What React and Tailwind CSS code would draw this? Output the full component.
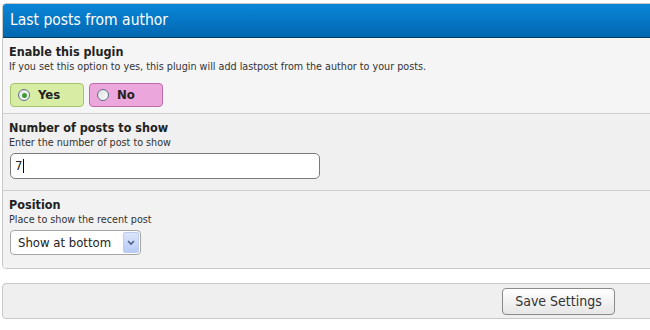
export default function App() {
  const font = { fontFamily: '"DejaVu Sans Condensed", "DejaVu Sans", sans-serif' };
  return (
    <div className="w-[650px] h-[330px] bg-white overflow-hidden pt-[3px] pl-[2px] text-[#333]" style={font}>
      <div className="w-[660px] border border-[#c8c8c8] rounded-[4px] overflow-hidden">
        <div className="h-[34px] bg-gradient-to-b from-[#0a86d8] to-[#0267b0] border-b border-[#033d63] flex items-center pl-[7px]">
          <span className="text-white text-[15.5px] leading-none">Last posts from author</span>
        </div>
        <div className="bg-[#f5f5f5] border-b border-[#cfcfcf] pl-[6px] pt-[6px] pb-[6px]">
          <div className="text-[12.5px] font-bold leading-[16px] text-[#222]">Enable this plugin</div>
          <div className="text-[10.7px] leading-[13px] text-[#333]">If you set this option to yes, this plugin will add lastpost from the author to your posts.</div>
          <div className="flex gap-[5px] mt-[10px] pl-[1px]">
            <div className="w-[74px] h-[24px] rounded-[4px] border border-[#a6c46c] bg-[#d8eda4] flex items-center pl-[7px] gap-[8px]">
              <span className="w-[12px] h-[12px] rounded-full border border-[#5a6f86] bg-gradient-to-br from-[#e4e4e4] to-white flex items-center justify-center">
                <span className="w-[5px] h-[5px] rounded-full bg-[#3e9a36]" />
              </span>
              <span className="text-[13px] font-bold text-[#222]">Yes</span>
            </div>
            <div className="w-[74px] h-[24px] rounded-[4px] border border-[#c06aae] bg-[#eba6dc] flex items-center pl-[7px] gap-[8px]">
              <span className="w-[12px] h-[12px] rounded-full border border-[#5a6f86] bg-gradient-to-br from-[#dcdcdc] to-white" />
              <span className="text-[13px] font-bold text-[#222]">No</span>
            </div>
          </div>
        </div>
        <div className="bg-[#f0f0f0] border-b border-[#cfcfcf] pl-[6px] pt-[6px] pb-[11px]">
          <div className="text-[12.5px] font-bold leading-[16px] text-[#222]">Number of posts to show</div>
          <div className="text-[10.7px] leading-[13px] text-[#333]">Enter the number of post to show</div>
          <div className="mt-[4px] ml-[1px] w-[310px] h-[26px] rounded-[5px] border border-[#7a7a7a] bg-white flex items-center pl-[4px]">
            <span className="text-[13px] text-[#222]">7</span>
            <span className="w-[1px] h-[14px] bg-black ml-[1px]" />
          </div>
        </div>
        <div className="bg-[#f2f2f2] pl-[6px] pt-[6px] pb-[13px]">
          <div className="text-[12.5px] font-bold leading-[16px] text-[#222]">Position</div>
          <div className="text-[10.7px] leading-[13px] text-[#333]">Place to show the recent post</div>
          <div className="mt-[4px] ml-[1px] w-[131px] h-[25px] rounded-[4px] border border-[#a5a5a5] bg-white flex items-center justify-between pl-[7px] pr-[1px]">
            <span className="text-[13px] text-[#222]">Show at bottom</span>
            <span className="w-[16px] h-[21px] rounded-[2px] bg-gradient-to-b from-[#dbe6fb] to-[#b7cbf5] border border-[#bccbee] flex items-center justify-center">
              <svg width="8" height="6" viewBox="0 0 8 6">
                <path d="M1 1 L4 4 L7 1" fill="none" stroke="#4d6185" strokeWidth="1.6" />
              </svg>
            </span>
          </div>
        </div>
      </div>
      <div className="mt-[14px] w-[660px] h-[36px] border border-[#c8c8c8] rounded-[4px] bg-[#efefef] flex items-center justify-end pr-[46px]">
        <button className="w-[113px] h-[27px] rounded-[4px] border border-[#8a8a8a] bg-gradient-to-b from-white to-[#e6e6e6] text-[14px] text-[#333] flex items-center justify-center">Save Settings</button>
      </div>
    </div>
  );
}
